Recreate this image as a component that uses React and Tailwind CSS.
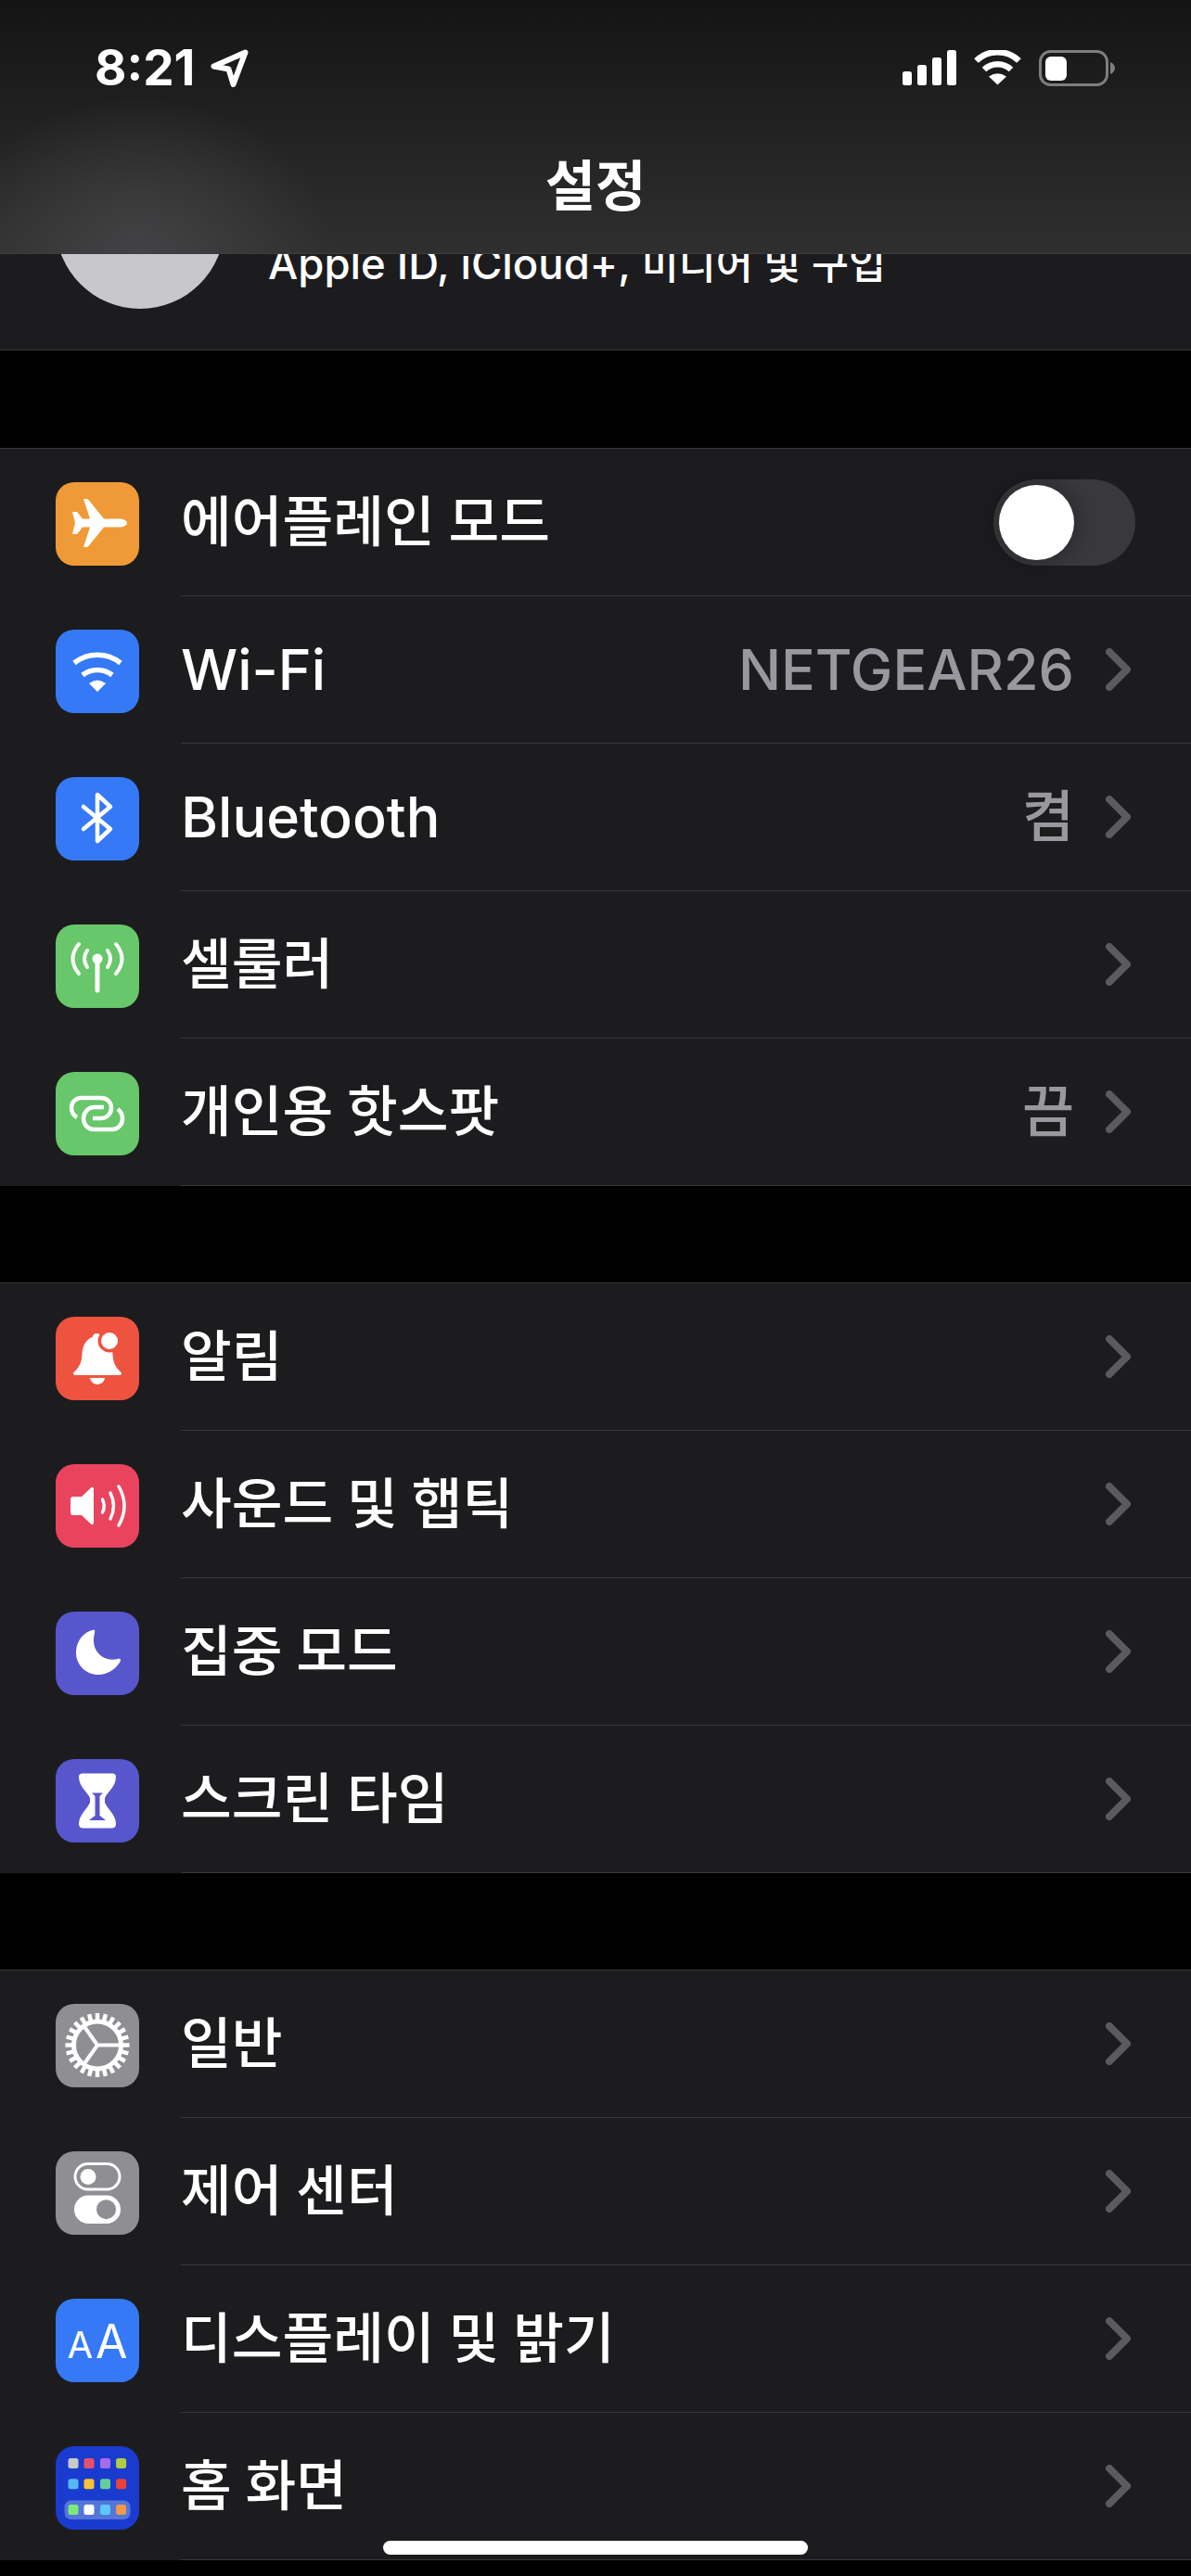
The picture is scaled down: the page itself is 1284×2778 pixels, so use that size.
import React from 'react';

const font = "font-['Inter','Noto_Sans_CJK_KR',sans-serif]";

const Plane = () => (
  <svg viewBox="0 0 90 90" className="w-full h-full">
    <path fill="#fff" d="M77 44c0 2.5-4 4.5-9 4.5H52L35 69.500a1.500 1.500 0 0 1-1.200.5H30L37 48.500H29L23.500 55.500a1.500 1.500 0 0 1-1.200.6H18L21 44 18 32h4.300a1.500 1.500 0 0 1 1.200.6L29 39.500h8L30 18h3.800a1.500 1.500 0 0 1 1.200.5L52 39.500h16C73 39.500 77 41.500 77 44z" />
  </svg>
);

const WifiIcon = () => (
  <svg viewBox="0 0 90 90" className="w-full h-full" fill="none" stroke="#fff" strokeWidth="5.500">
    <path d="M20 36A40 40 0 0 1 70 36" />
    <path d="M29 49A26 26 0 0 1 61 49" />
    <path fill="#fff" stroke="none" d="M45 67L36 58Q45 51 54 58Z" />
  </svg>
);

const BluetoothIcon = () => (
  <svg viewBox="0 0 90 90" className="w-full h-full" fill="none" stroke="#fff" strokeWidth="4.500" strokeLinejoin="round" strokeLinecap="round">
    <path d="M30 32L59 56L45 69V19L59 32L30 56" />
  </svg>
);

const CellIcon = () => (
  <svg viewBox="0 0 90 90" className="w-full h-full" fill="none" stroke="#fff" strokeWidth="4" strokeLinecap="round">
    <circle cx="45" cy="37" r="5.500" fill="#fff" stroke="none" />
    <path d="M45 38V71" strokeWidth="5" />
    <path d="M34 28Q28 37 34 46" />
    <path d="M56 28Q62 37 56 46" />
    <path d="M25 21Q12 37 25 53" />
    <path d="M65 21Q78 37 65 53" />
  </svg>
);

const HotspotIcon = () => (
  <svg viewBox="0 0 90 90" className="w-full h-full" fill="none" stroke="#fff" strokeWidth="4.500" strokeLinecap="butt">
    <path d="M23 49C18 46 17 42 17 38.500C17 32 22 28 28 28H49C56 28 60 33 60 39C60 45 55 50 49 50H40" />
    <path d="M67 40C71 43 72 47 72 50.500C72 57 67 62 61 62H41C35 62 30 57 30 50C30 44 35 38 41 38H52" />
  </svg>
);

const BellIcon = () => (
  <svg viewBox="0 0 90 90" className="w-full h-full">
    <path fill="#fff" d="M44 18c-2.500 0-4 2-4 3.500C32 25 29 32 28.500 40C28 49 26 53 22 57.500C20 59.500 19 60 19 61C19 62.500 20 63 21.500 63H68.500C70 63 71 62.500 71 61C71 60 70 59.500 68 57.500C64 53 62 49 61.500 40C61 32 58 25 50 21.500C49 20 47 18 44 18z" />
    <path fill="#fff" d="M37 66H53C52 71 48 73 45 73S38 71 37 66z" />
    <circle cx="58" cy="26" r="12.500" fill="#ee5340" />
    <circle cx="58" cy="26" r="9" fill="#fff" />
  </svg>
);

const SoundIcon = () => (
  <svg viewBox="0 0 90 90" className="w-full h-full" fill="none" stroke="#fff" strokeWidth="3.500" strokeLinecap="round">
    <path fill="#fff" stroke="none" d="M38 25.500L28 35H19a3 3 0 0 0-3 3V52a3 3 0 0 0 3 3H28L38 64.500c1.500 1.300 3 .5 3-1.500V27c0-2-1.500-2.800-3-1.500z" />
    <path d="M50.500 38Q54 45 50.500 52" />
    <path d="M59 31Q66 45 59 59" />
    <path d="M68 24Q80 45 68 66" />
  </svg>
);

const MoonIcon = () => (
  <svg viewBox="0 0 90 90" className="w-full h-full">
    <path fill="#fff" d="M41 19.500C29 22 22 33 22 44c0 14 11 24 24 24 11 0 20-7 24-15 .5-1.500-1-2.500-3-2-17 4-30-10-25-28 .5-2 0-3.500-1-3.500z" />
  </svg>
);

const HourglassIcon = () => (
  <svg viewBox="0 0 90 90" className="w-full h-full">
    <path fill="#fff" d="M29 15.500H61Q65 15.500 65 19C65 30 56 35 53 42V47C56 54 65 60 65 70Q65 74.500 60 74.500H30Q25 74.500 25 70C25 60 34 54 37 47V42C34 35 25 30 25 19Q25 15.500 29 15.500z" />
    <path fill="#5856cd" d="M39 36.500H51L47.500 40V61L54 66H36L42.500 61V40z" />
  </svg>
);

const GearIcon = () => (
  <svg viewBox="0 0 90 90" className="w-full h-full" fill="none" stroke="#fff" strokeLinecap="round">
    <circle cx="45" cy="44.500" r="25.500" strokeWidth="5" />
    {Array.from({ length: 24 }).map((_, i) => (
      <path key={i} d="M45 10V18" strokeWidth="4.500" strokeLinecap="butt" transform={`rotate(${i * 15} 45 44.500)`} />
    ))}
    <path d="M45 44.500H70M45 44.500L30.500 24M45 44.500L30.500 65" strokeWidth="4" />
  </svg>
);

const ControlIcon = () => (
  <svg viewBox="0 0 90 90" className="w-full h-full">
    <rect x="21" y="13.500" width="48" height="27.500" rx="13.700" fill="none" stroke="#fff" strokeWidth="3" />
    <circle cx="35" cy="27.500" r="8.500" fill="#fff" />
    <rect x="20" y="47.500" width="50" height="30.500" rx="15.200" fill="#fff" />
    <circle cx="54.500" cy="62.700" r="10.500" fill="#8e8e93" />
  </svg>
);

const DisplayIcon = () => (
  <div className="w-full h-full flex items-baseline justify-center pt-[21px] gap-[3px] text-white font-['Inter',sans-serif] font-normal leading-none">
    <span className="text-[40px] leading-none">A</span>
    <span className="text-[50px] leading-none">A</span>
  </div>
);

const homeDots = [
  [19, 18.6, '#c9c9c4'], [36, 18.6, '#e8516a'], [53.5, 18.6, '#a86be8'], [70.6, 18.6, '#b0cc45'],
  [19, 40.7, '#55b8f5'], [36, 40.7, '#f6c332'], [53.5, 40.7, '#64cf9a'], [70.6, 40.7, '#e84336'],
  [19, 68.5, '#7de87c'], [36, 68.5, '#ffffff'], [53.5, 68.5, '#5ac8fa'], [70.6, 68.5, '#f09a50'],
];

const HomeIcon = () => (
  <svg viewBox="0 0 90 90" className="w-full h-full">
    <rect x="9.500" y="58.500" width="71" height="20.500" rx="7" fill="#5376d8" />
    {homeDots.map(([x, y, c], i) => (
      <rect key={i} x={x - 5.500} y={y - 5.500} width="11" height="11" rx="2.500" fill={c} />
    ))}
  </svg>
);

const Chevron = () => (
  <svg viewBox="0 0 27 46" className="w-[27px] h-[46px] shrink-0" fill="none" stroke="#5b5b5f" strokeWidth="8" strokeLinecap="round" strokeLinejoin="round">
    <path d="M4 4L23 23L4 42" />
  </svg>
);

const Toggle = () => (
  <div className="w-[153px] h-[93px] -mr-[5px] rounded-full bg-[#39393d] p-[6px]">
    <div className="w-[81px] h-[81px] rounded-full bg-white shadow-[0_0_18px_8px_rgba(0,0,0,0.18)]" />
  </div>
);

const groups = [
  [
    { label: '에어플레인 모드', color: 'bg-[#f09a37]', Icon: Plane, toggle: true },
    { label: 'Wi-Fi', color: 'bg-[#3579f6]', Icon: WifiIcon, value: 'NETGEAR26', latin: true },
    { label: 'Bluetooth', color: 'bg-[#3579f6]', Icon: BluetoothIcon, value: '켬', latin: true },
    { label: '셀룰러', color: 'bg-[#67c76a]', Icon: CellIcon },
    { label: '개인용 핫스팟', color: 'bg-[#67c76a]', Icon: HotspotIcon, value: '끔' },
  ],
  [
    { label: '알림', color: 'bg-[#ee5340]', Icon: BellIcon },
    { label: '사운드 및 햅틱', color: 'bg-[#ea435e]', Icon: SoundIcon },
    { label: '집중 모드', color: 'bg-[#5856cd]', Icon: MoonIcon },
    { label: '스크린 타임', color: 'bg-[#5856cd]', Icon: HourglassIcon },
  ],
  [
    { label: '일반', color: 'bg-[#8e8e93]', Icon: GearIcon },
    { label: '제어 센터', color: 'bg-[#8e8e93]', Icon: ControlIcon },
    { label: '디스플레이 및 밝기', color: 'bg-[#3579f6]', Icon: DisplayIcon },
    { label: '홈 화면', color: 'bg-[#1a3bd0]', Icon: HomeIcon },
  ],
];

const Row = ({ item }) => {
  const { label, color, Icon, value, toggle, latin } = item;
  return (
    <div className="flex h-[159px] pl-[60px]">
      <div className={`w-[90px] h-[90px] mt-[36px] rounded-[20px] overflow-hidden shrink-0 ${color}`}>
        <Icon />
      </div>
      <div className="flex-1 ml-[45px] pr-[65px] flex items-center justify-between border-b border-[#38383a]">
        <span className={`text-white leading-none ${latin ? 'text-[61px] font-[550]' : 'text-[59.5px] font-medium [word-spacing:-1px]'}`}>{label}</span>
        {toggle ? (
          <Toggle />
        ) : (
          <div className="flex items-center gap-[34px]">
            {value && <span className="text-[#98989e] text-[61px] font-[550] leading-none">{value}</span>}
            <Chevron />
          </div>
        )}
      </div>
    </div>
  );
};

const StatusBar = () => (
  <div className="flex justify-between items-start pt-[53px] pl-[102px] pr-[81px] h-[150px]">
    <div className="flex items-start gap-[17px]">
      <span className="text-white text-[53px] font-bold leading-[40px]">8:21</span>
      <svg viewBox="0 0 41 41" className="w-[41px] h-[41px]" fill="none" stroke="#fff" strokeWidth="6" strokeLinejoin="round">
        <path d="M37.500 3.500L3.500 18.500L19.500 21.500L24.500 38Z" />
      </svg>
    </div>
    <div className="flex items-start gap-[19px] pt-px">
      <svg viewBox="0 0 58 38" className="w-[58px] h-[38px]" fill="#fff">
        <rect x="0" y="23" width="10" height="15" rx="2.500" />
        <rect x="16" y="16" width="10" height="22" rx="2.500" />
        <rect x="32" y="8" width="10" height="30" rx="2.500" />
        <rect x="48" y="0" width="10" height="38" rx="2.500" />
      </svg>
      <svg viewBox="0 0 51 38" className="w-[51px] h-[38px]" fill="none" stroke="#fff" strokeWidth="6.500">
        <path d="M2.500 11.500A33 33 0 0 1 48.500 11.500" />
        <path d="M11 21A21 21 0 0 1 40 21" />
        <path fill="#fff" stroke="none" d="M25.500 37.500L16 28.500Q25.500 22 35 28.500Z" />
      </svg>
      <svg viewBox="0 0 83 40" className="w-[83px] h-[40px]" fill="none">
        <rect x="1.500" y="1.500" width="72" height="36" rx="11" stroke="#7e7e80" strokeWidth="3" />
        <rect x="7" y="7" width="23" height="26" rx="6" fill="#fff" />
        <path d="M77 13C80 14 82 17 82 19.500C82 22 80 25 77 26Z" fill="#7e7e80" />
      </svg>
    </div>
  </div>
);

const App = () => {
  return (
    <div className={`${font} relative w-full h-[2778px] overflow-hidden bg-black`}>
      <header className="h-[274px] border-b border-[#3d3d3f] bg-[radial-gradient(ellipse_210px_170px_at_150px_275px,#434345,transparent),linear-gradient(#141415,#2f2f30)]">
        <StatusBar />
        <h1 className="text-center text-white text-[59px] font-semibold leading-none mt-[21px]">설정</h1>
      </header>

      <div className="relative h-[104px] overflow-hidden bg-[#1c1c1e] border-b border-[#38383a] flex">
        <div className="w-[182px] h-[182px] -mt-[123px] ml-[60px] rounded-full bg-[#c7c7cc] shrink-0" />
        <div className="ml-[47px] -mt-[17px] text-white text-[45.500px] font-medium leading-[56px] whitespace-nowrap">
          Apple ID, iCloud+, <span className="text-[43.500px]">미디어 및 구입</span>
        </div>
      </div>

      {groups.map((rows, g) => (
        <section key={g} className={`bg-[#1c1c1e] border-t border-[#38383a] ${g === 0 ? 'mt-[105px]' : 'mt-[104px]'}`}>
          {rows.map((item) => (
            <Row key={item.label} item={item} />
          ))}
        </section>
      ))}

      <div className="absolute left-[413px] top-[2740px] w-[458px] h-[15px] rounded-full bg-white" />
    </div>
  );
};

export default App;
